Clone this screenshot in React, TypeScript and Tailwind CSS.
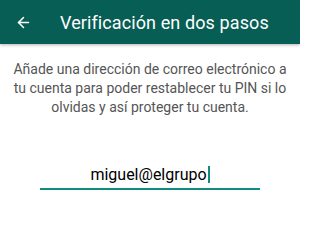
import { ArrowLeft } from "lucide-react";

export default function App() {
  return (
    <div className="w-[300px] h-[203px] bg-white overflow-hidden font-['Roboto',sans-serif]">
      {/* Toolbar */}
      <header className="relative z-10 flex h-11 items-center bg-[#075e54] shadow-[0_1px_3px_rgba(0,0,0,0.3)]">
        <div className="flex w-[60px] items-center pl-[15px]">
          <ArrowLeft className="h-[17px] w-[17px] text-white" strokeWidth={2.2} />
        </div>
        <h1 className="text-[18px] font-normal tracking-[0.1px] text-white">Verificación en dos pasos</h1>
      </header>

      {/* Description */}
      <p className="mx-auto mt-[16px] w-[280px] text-center text-[14px] leading-[19px] text-[#555555]">
        Añade una dirección de correo electrónico a tu cuenta para poder restablecer tu PIN si lo
        olvidas y así proteger tu cuenta.
      </p>

      {/* Email input */}
      <div className="mx-auto mt-[46px] w-[220px] border-b-2 border-[#128c7e] pb-[1px] text-center">
        <span className="text-[16px] leading-[20px] text-black">miguel@elgrupo</span>
        <span className="ml-[1px] inline-block h-[17px] w-[2px] translate-y-[3px] bg-[#128c7e]" />
      </div>
    </div>
  );
}
